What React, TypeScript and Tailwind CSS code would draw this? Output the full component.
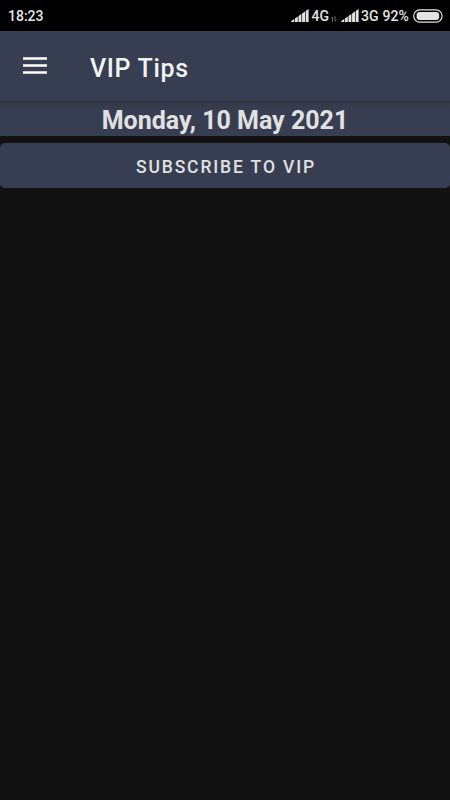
import React from 'react';

const SIGNAL_BARS = [2.5, 5, 7.5, 10, 12.5];

const SignalIcon: React.FC = () => (
  <svg width="18" height="13" viewBox="0 0 18 13" className="shrink-0" fill="#e4e4e4">
    {SIGNAL_BARS.map((h, i) => (
      <path key={h} d={`M${0.3 + i * 3.6} 13v${1.6 - h}l2.9-2V13z`} />
    ))}
  </svg>
);

const StatusBar: React.FC = () => (
  <div className="flex h-[31px] items-center justify-between pr-[7px] pl-2 text-sm font-medium text-[#e4e4e4]">
    <span>18:23</span>
    <div className="flex items-center">
      <SignalIcon />
      <span className="ml-0.5">4G</span>
      <svg width="6" height="6" viewBox="0 0 6 6" className="mt-1.5 mr-1 ml-0.5" stroke="#666" fill="none">
        <path d="M1.5 6V1M0 2.5 1.5 1M4 0v5M5.5 3.5 4 5" />
      </svg>
      <SignalIcon />
      <span className="ml-0.5">3G</span>
      <span className="ml-1 tracking-[0.1px]">92%</span>
      <svg width="30" height="14" viewBox="0 0 30 14" className="ml-1 shrink-0">
        <rect x="0.7" y="0.9" width="28.4" height="12.2" rx="6.1" fill="none" stroke="#e4e4e4" strokeWidth="1.2" />
        <rect x="3.6" y="3" width="22.6" height="8" rx="3" fill="#e4e4e4" />
      </svg>
    </div>
  </div>
);

export default function App() {
  return (
    <div className="min-h-screen bg-[#121212] font-[Roboto,sans-serif]">
      <div className="bg-black">
        <StatusBar />
      </div>

      <header className="flex h-[70px] items-center bg-[#373e51] pl-[23px] text-[#f2f2f2]">
        <svg width="24" height="18" viewBox="0 0 24 18" fill="#fff">
          <path d="M0 .3h24v2.4H0zM0 7.3h24v2.4H0zM0 14.3h24v2.4H0z" />
        </svg>
        <h1 className="ml-[43px] pt-[5px] text-[25px] font-medium tracking-[0.7px]">VIP Tips</h1>
      </header>

      <div className="flex h-[35px] items-center justify-center border-t border-[#262b38] bg-linear-to-b from-[#323849] to-[#373e51] to-20% pt-[3px] text-[25px] font-bold text-[#e1e1e1]">
        Monday, 10 May 2021
      </div>

      <button className="mt-[7px] flex h-[45px] w-full items-center justify-center rounded-[5px] bg-[#373e51] pt-[3px] pl-0.5 text-[17.5px] font-medium tracking-[1.87px] text-[#e1e1e1]">
        SUBSCRIBE TO VIP
      </button>
    </div>
  );
}
